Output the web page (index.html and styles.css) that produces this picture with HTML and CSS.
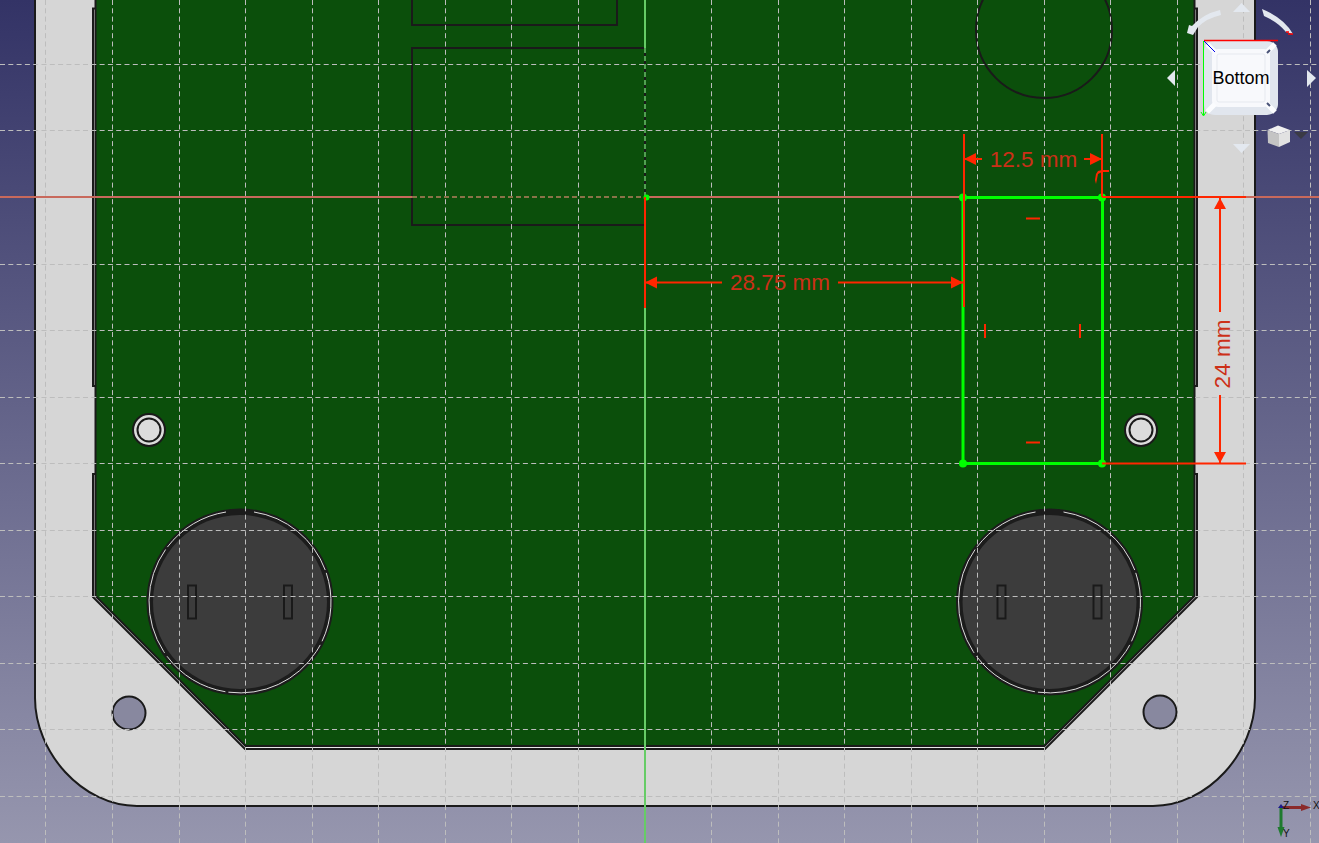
FILE: index.html
```html
<!DOCTYPE html>
<html lang="en">
<head>
    <meta charset="UTF-8">
    <title>Sketch - Bottom view</title>
    <link rel="stylesheet" href="styles.css">
</head>
<body>
    <svg class="viewport" viewBox="0 0 1319 843" width="1319" height="843">
        <defs>
            <linearGradient id="sky" x1="0" y1="0" x2="0" y2="1">
                <stop offset="0" stop-color="#333366"/>
                <stop offset="1" stop-color="#9696ae"/>
            </linearGradient>
        </defs>
        <rect width="1319" height="843" fill="url(#sky)"/>

        <!-- enclosure -->
        <path class="case" d="M35 -5 V698 C35 752 82 806 137 806 H1153 C1208 806 1255 752 1255 698 V-5 Z"/>
        <circle class="hole" cx="129" cy="713" r="16.5"/>
        <circle class="hole" cx="1160" cy="712" r="16.5"/>

        <!-- board -->
        <path class="pcb" d="M95 -5 V596 L245 746 H1045 L1195 596 V-5 Z"/>
        <path class="lip" d="M94 597 L245 748 H1045 L1196 597"/>
        <path class="outline" d="M95.5 -5 V596 L245.5 746 H1044.5 L1194.5 596 V-5"/>
        <path class="outline" d="M95 8.5 H93 V386 H95 M95 474 H93 V597 L245 749 H1045 L1197 597 V474 H1195 M1195 386 H1197 V8.5 H1195"/>

        <!-- board parts -->
        <path class="part" d="M412 -5 V25 H617 V-5"/>
        <path class="part" d="M645 48 H412 V225 H645"/>
        <circle class="part" cx="1044" cy="30" r="68"/>
        <circle class="stud" cx="149" cy="430" r="16"/>
        <circle class="part" cx="149" cy="430" r="11.5"/>
        <circle class="stud" cx="1141" cy="430" r="16"/>
        <circle class="part" cx="1141" cy="430" r="11.5"/>

        <g>
            <circle class="cell" cx="240" cy="602" r="93.5"/>
            <path class="shine" d="M226 512 A91 91 0 1 0 254 512"/>
            <circle class="rim" cx="240" cy="602" r="87"/>
            <rect class="slot" x="188" y="585.5" width="8" height="33"/>
            <rect class="slot" x="284" y="585.5" width="8" height="33"/>
        </g>
        <g>
            <circle class="cell" cx="1049.5" cy="602" r="93.5"/>
            <path class="shine" d="M1035.5 512 A91 91 0 1 0 1063.5 512"/>
            <circle class="rim" cx="1049.5" cy="602" r="87"/>
            <rect class="slot" x="997.5" y="585.5" width="8" height="33"/>
            <rect class="slot" x="1093.5" y="585.5" width="8" height="33"/>
        </g>

        <!-- sketch axes -->
        <path class="axis-x" d="M0 197 H412 M645 197 H1319"/>
        <path class="axis-y" d="M645 -5 V48 M645 197 V848"/>
        <path class="axis-x-under" d="M412 197 H645"/>
        <path class="axis-x-dash" d="M412 197 H645"/>
        <path class="axis-y-under" d="M645 48 V197"/>
        <path class="axis-y-dash" d="M645 48 V197"/>

        <!-- grid -->
        <path class="grid" d="M45.5 0 V843 M112.5 0 V843 M179.5 0 V843 M245.5 0 V843 M312.5 0 V843 M378.5 0 V843 M445.5 0 V843 M511.5 0 V843 M578.5 0 V843 M711.5 0 V843 M778.5 0 V843 M844.5 0 V843 M911.5 0 V843 M977.5 0 V843 M1044.5 0 V843 M1110.5 0 V843 M1177.5 0 V843 M1243.5 0 V843 M1310.5 0 V843"/>
        <path class="grid" d="M0 64.5 H1319 M0 130.5 H1319 M0 264.5 H1319 M0 330.5 H1319 M0 397.5 H1319 M0 463.5 H1319 M0 530.5 H1319 M0 596.5 H1319 M0 663.5 H1319 M0 729.5 H1319 M0 796.5 H1319"/>

        <!-- sketch rectangle -->
        <path class="sketch" d="M963 197.5 H1102.5 V463.5 H963 Z"/>
        <g class="points">
            <circle cx="963" cy="197.5" r="4"/>
            <circle cx="1102" cy="197.5" r="4"/>
            <circle cx="963" cy="463.5" r="4"/>
            <circle cx="1102" cy="463.5" r="4"/>
            <circle cx="646.5" cy="197.5" r="3"/>
        </g>

        <!-- constraints and dimensions -->
        <path class="dim" d="M1026 218.5 H1040 M1026 442.5 H1040 M985 324 V338 M1080 324 V338"/>
        <path class="dim" d="M964 134 V307 M1102 134 V197 M1102 197 H1246 M1102 463.5 H1246"/>
        <path class="dim" d="M645 197 V308 M645 282.5 H722 M838 282.5 H963"/>
        <path class="dim" d="M964 159 H982 M1084 159 H1102"/>
        <path class="dim" d="M1220 197 V312 M1220 395 V463"/>
        <path class="arrow" d="M1109 170 V172 H1102 L1098 174 L1097 179 L1096 184 L1095 180 L1096 174 L1098 171 L1102 170 Z"/>
        <path class="arrow" d="M645 282.5 L657 276.5 V288.5 Z"/>
        <path class="arrow" d="M963 282.5 L951 276.5 V288.5 Z"/>
        <path class="arrow" d="M964 159 L976 153 V165 Z"/>
        <path class="arrow" d="M1102 159 L1090 153 V165 Z"/>
        <path class="arrow" d="M1220 198 L1214 209 H1226 Z"/>
        <path class="arrow" d="M1220 463 L1214 452 H1226 Z"/>
        <text class="dim-label" x="1033.5" y="167">12.5 mm</text>
        <text class="dim-label" x="780" y="290">28.75 mm</text>
        <text class="dim-label" transform="translate(1229.5 354) rotate(-90)">24 mm</text>

        <!-- navigation cube -->
        <g>
            <path class="nav-arrow" d="M1233 12 L1241.5 3 L1250 12 Z"/>
            <path class="nav-arrow" d="M1233 144 H1250 L1241.5 153 Z"/>
            <path class="nav-arrow" d="M1167 78 L1175 70 V86 Z"/>
            <path class="nav-arrow" d="M1316 78 L1307 70 V87 Z"/>
            <path class="nav-arrow" d="M1220 10 L1221 15 Q1207 18 1198 27 L1193 35 L1187 33 L1189 25 L1192 26 Q1203 14 1220 10 Z"/>
            <path class="nav-arrow" d="M1262 9 L1264 16 Q1278 22 1286 32 L1293 34 Q1284 18 1262 9 Z"/>
            <rect class="face" x="1204" y="41" width="74" height="74" rx="11"/>
            <rect class="face-inner" x="1212" y="49" width="58" height="58" rx="6"/>
            <path class="face-corner" d="M1207 44 L1215 52 M1275 44 L1267 52 M1207 112 L1215 104 M1275 112 L1267 104"/>
            <rect class="face-mark" x="1217" y="54" width="48" height="48" rx="2"/>
            <path class="face-tick" d="M1267 53 L1270 50 M1267 103 L1270 106"/>
            <path class="cube-x" d="M1204 40.5 H1278"/>
            <path class="cube-y" d="M1203.5 41 V115 M1201 112 L1203.5 116 L1206 112"/>
            <path class="cube-z" d="M1204 41 L1215 52"/>
            <text class="face-label" x="1241" y="84">Bottom</text>
            <path class="nav-tip" d="M1286 32 H1289 M1288 34 H1293"/>
            <path class="mini-top" d="M1267.5 130 L1278 125.5 L1290 130 L1279 134 Z"/>
            <path class="mini-left" d="M1267.5 130 L1279 134 V147 L1268 143 Z"/>
            <path class="mini-right" d="M1279 134 L1290 130 V142 L1279 147 Z"/>
            <path class="nav-menu" d="M1294 132 H1308 L1301 139 Z"/>
        </g>

        <!-- axis cross -->
        <path class="triad-x" d="M1281 807.5 H1303"/>
        <path class="triad-x-head" d="M1301 804 L1311 807.5 L1301 811 Z"/>
        <path class="triad-y" d="M1281 807 V829"/>
        <path class="triad-y-head" d="M1277.5 827 H1284.5 L1281 837 Z"/>
        <path class="triad-z" d="M1278 808 L1281 804 L1284 808 Z"/>
        <text class="triad-label" x="1283" y="808.5">Z</text>
        <text class="triad-label" x="1313" y="808.5">X</text>
        <text class="triad-label" x="1283" y="836.5">Y</text>
    </svg>
</body>
</html>
```

FILE: styles.css
```css
* {
    margin: 0;
    padding: 0;
    box-sizing: border-box;
}

html,
body {
    height: 100%;
    overflow: hidden;
    background: #666688;
}

.viewport {
    display: block;
    font-family: 'Liberation Sans', Arial, sans-serif;
}

.case {
    fill: #d6d6d6;
    stroke: #1a1a1a;
    stroke-width: 2;
}

.hole {
    fill: #88889f;
    stroke: #1a1a1a;
    stroke-width: 2;
}

.pcb {
    fill: #0b4f0b;
}

.outline {
    fill: none;
    stroke: #1a1a1a;
    stroke-width: 2;
}

.lip {
    fill: none;
    stroke: #e8e8e8;
    stroke-width: 2;
}

.part {
    fill: none;
    stroke: #1a1a1a;
    stroke-width: 2;
}

.stud {
    fill: #dcdcdc;
    stroke: #1a1a1a;
    stroke-width: 2;
}

.cell {
    fill: #1c1c1c;
}

.rim {
    fill: #3c3c3c;
}

/* the light ring on the holders is broken up in places */
.shine {
    fill: none;
    stroke: #dcdcdc;
    stroke-width: 1;
    stroke-dasharray: 70 3 110 4;
}

.slot {
    fill: #3c3c3c;
    stroke: #1a1a1a;
    stroke-width: 2;
}

.axis-x {
    stroke: #c8695c;
    stroke-width: 2;
}

.axis-y {
    stroke: #66cc66;
    stroke-width: 2;
}

.axis-x-under {
    stroke: #0b4f0b;
    stroke-width: 2;
}

.axis-x-dash {
    stroke: #b5805f;
    stroke-width: 1.5;
    stroke-dasharray: 5 3;
}

.axis-y-under {
    stroke: #1a1a1a;
    stroke-width: 2;
}

.axis-y-dash {
    stroke: #66cc66;
    stroke-width: 1.5;
    stroke-dasharray: 5 3;
}

.grid {
    fill: none;
    stroke: #bdbdbd;
    stroke-width: 1;
    stroke-dasharray: 5 3.3;
}

.sketch {
    fill: none;
    stroke: #00ff00;
    stroke-width: 3;
}

.points {
    fill: #00ff00;
}

.dim {
    fill: none;
    stroke: #ff2600;
    stroke-width: 2;
}

.arrow {
    fill: #ff2600;
}

.dim-label {
    fill: #cc3018;
    font-size: 22.5px;
    text-anchor: middle;
}

.nav-arrow {
    fill: #e3e8ef;
}

.face {
    fill: #e1e6ee;
}

.face-inner {
    fill: #f8f9fc;
}

.face-corner {
    fill: none;
    stroke: #fbfcfe;
    stroke-width: 5;
}

.face-mark {
    fill: none;
    stroke: #e6e9ef;
    stroke-width: 1;
}

.face-tick {
    stroke: #4a5478;
    stroke-width: 2;
}

.cube-x {
    stroke: #ff0000;
    stroke-width: 1.5;
}

.cube-y {
    fill: none;
    stroke: #00ff00;
    stroke-width: 1;
}

.cube-z {
    stroke: #0000ee;
    stroke-width: 1;
}

.face-label {
    fill: #000;
    font-size: 18px;
    text-anchor: middle;
}

.nav-tip {
    stroke: #ff0000;
    stroke-width: 1.5;
}

.mini-top {
    fill: #f0f0f0;
}

.mini-left {
    fill: #c4c4c4;
}

.mini-right {
    fill: #e2e2e2;
}

.nav-menu {
    fill: #3a3a44;
}

.triad-x {
    stroke: #8b2a2a;
    stroke-width: 3;
}

.triad-x-head {
    fill: #8b2a2a;
}

.triad-y {
    stroke: #1f7a2f;
    stroke-width: 3;
}

.triad-y-head {
    fill: #1f7a2f;
}

.triad-z {
    fill: #1c1c8c;
}

.triad-label {
    fill: #111;
    font-size: 10px;
}
```
